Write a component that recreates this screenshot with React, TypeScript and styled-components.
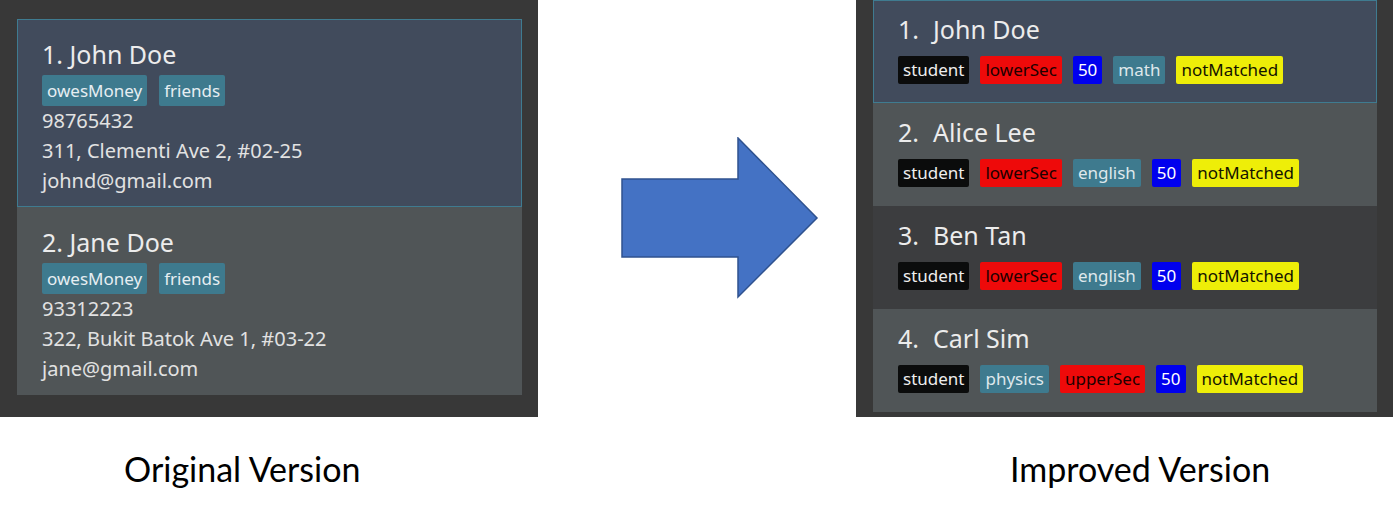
import React from "react";
import styled, { createGlobalStyle } from "styled-components";

const Global = createGlobalStyle`
  html, body { margin: 0; padding: 0; background: #ffffff; }
  #root { width: 1393px; height: 516px; }
`;

const Page = styled.div`
  width: 1393px;
  height: 516px;
  display: flex;
  flex-direction: column;
  background: #ffffff;
  font-family: "Noto Sans", "Open Sans", sans-serif;
`;

const TopRow = styled.div`
  display: flex;
  height: 417px;
`;

const LeftPanel = styled.div`
  width: 538px;
  background: #383838;
  padding: 19px 0 0 17px;
  box-sizing: border-box;
  display: flex;
  flex-direction: column;
`;

const RightPanel = styled.div`
  width: 537px;
  background: #383838;
  padding: 0 16px 0 17px;
  box-sizing: border-box;
  display: flex;
  flex-direction: column;
`;

const ArrowCell = styled.div`
  flex: 1;
  padding: 137px 0 0 83px;
  box-sizing: border-box;
`;

const OldCard = styled.div<{ $selected?: boolean }>`
  width: 505px;
  height: 188px;
  box-sizing: border-box;
  background: ${(p) => (p.$selected ? "#414b5c" : "#505557")};
  border: 1px solid ${(p) => (p.$selected ? "#3f7b90" : "#505557")};
  padding: 17px 0 0 24px;
  color: #e4e4e4;
  display: flex;
  flex-direction: column;
`;

const OldName = styled.div`
  font-size: 25px;
  line-height: 34px;
  color: #ececec;
`;

const OldTags = styled.div`
  display: flex;
  gap: 12px;
  margin-top: 4px;
`;

const OldTag = styled.span`
  background: #3e7a8e;
  color: #e6eef2;
  font-size: 17px;
  line-height: 31px;
  height: 31px;
  padding: 0 5px;
  border-radius: 2px;
`;

const OldLine = styled.div`
  font-size: 20px;
  line-height: 30px;
  color: #e2e2e2;
  &:first-of-type { margin-top: 1px; }
`;

const NewCard = styled.div<{ $bg: string; $selected?: boolean }>`
  width: 504px;
  height: 103px;
  box-sizing: border-box;
  background: ${(p) => p.$bg};
  border: 1px solid ${(p) => (p.$selected ? "#3f7b90" : p.$bg)};
  padding: 12px 0 0 24px;
  display: flex;
  flex-direction: column;
`;

const NewName = styled.div`
  font-size: 25px;
  line-height: 32px;
  color: #ececec;
  display: flex;
  gap: 14px;
`;

const NewTags = styled.div`
  display: flex;
  gap: 11px;
  margin-top: 11px;
`;

type Kind = "black" | "red" | "blue" | "teal" | "yellow";

const tagColors: Record<Kind, { bg: string; fg: string }> = {
  black: { bg: "#0b0c0c", fg: "#eeeeee" },
  red: { bg: "#ee0a0a", fg: "#200000" },
  blue: { bg: "#0000ee", fg: "#ffffff" },
  teal: { bg: "#3e7a8e", fg: "#dfe8ec" },
  yellow: { bg: "#eeee08", fg: "#141400" },
};

const NewTag = styled.span<{ $kind: Kind }>`
  background: ${(p) => tagColors[p.$kind].bg};
  color: ${(p) => tagColors[p.$kind].fg};
  font-size: 17px;
  line-height: 28px;
  height: 28px;
  padding: 0 5px;
  border-radius: 2px;
`;

const LabelRow = styled.div`
  display: grid;
  grid-template-columns: 1010px auto;
  padding-top: 32px;
`;

const Label = styled.div<{ $indent?: number }>`
  padding-left: ${(p) => p.$indent ?? 0}px;
  font-family: Lato, "Noto Sans", sans-serif;
  font-size: 34px;
  line-height: 40px;
  color: #000000;
`;

const oldPeople = [
  { n: "1. John Doe", phone: "98765432", addr: "311, Clementi Ave 2, #02-25", email: "johnd@gmail.com", sel: true },
  { n: "2. Jane Doe", phone: "93312223", addr: "322, Bukit Batok Ave 1, #03-22", email: "jane@gmail.com", sel: false },
];

const newPeople: { i: string; n: string; bg: string; sel?: boolean; tags: [string, Kind][] }[] = [
  { i: "1.", n: "John Doe", bg: "#414b5c", sel: true, tags: [["student", "black"], ["lowerSec", "red"], ["50", "blue"], ["math", "teal"], ["notMatched", "yellow"]] },
  { i: "2.", n: "Alice Lee", bg: "#505557", tags: [["student", "black"], ["lowerSec", "red"], ["english", "teal"], ["50", "blue"], ["notMatched", "yellow"]] },
  { i: "3.", n: "Ben Tan", bg: "#3c3d3f", tags: [["student", "black"], ["lowerSec", "red"], ["english", "teal"], ["50", "blue"], ["notMatched", "yellow"]] },
  { i: "4.", n: "Carl Sim", bg: "#505557", tags: [["student", "black"], ["physics", "teal"], ["upperSec", "red"], ["50", "blue"], ["notMatched", "yellow"]] },
];

export default function App() {
  return (
    <Page>
      <Global />
      <TopRow>
        <LeftPanel>
          {oldPeople.map((p) => (
            <OldCard key={p.n} $selected={p.sel}>
              <OldName>{p.n}</OldName>
              <OldTags>
                <OldTag>owesMoney</OldTag>
                <OldTag>friends</OldTag>
              </OldTags>
              <OldLine>{p.phone}</OldLine>
              <OldLine>{p.addr}</OldLine>
              <OldLine>{p.email}</OldLine>
            </OldCard>
          ))}
        </LeftPanel>
        <ArrowCell>
          <svg width="198" height="162" viewBox="0 0 198 162">
            <path
              d="M1 42 H117 V1 L196 81 L117 160 V120 H1 Z"
              fill="#4472c4"
              stroke="#2f528f"
              strokeWidth="1.5"
            />
          </svg>
        </ArrowCell>
        <RightPanel>
          {newPeople.map((p) => (
            <NewCard key={p.n} $bg={p.bg} $selected={p.sel}>
              <NewName>
                <span>{p.i}</span>
                <span>{p.n}</span>
              </NewName>
              <NewTags>
                {p.tags.map(([t, k]) => (
                  <NewTag key={t} $kind={k}>{t}</NewTag>
                ))}
              </NewTags>
            </NewCard>
          ))}
        </RightPanel>
      </TopRow>
      <LabelRow>
        <Label $indent={124}>Original Version</Label>
        <Label>Improved Version</Label>
      </LabelRow>
    </Page>
  );
}
